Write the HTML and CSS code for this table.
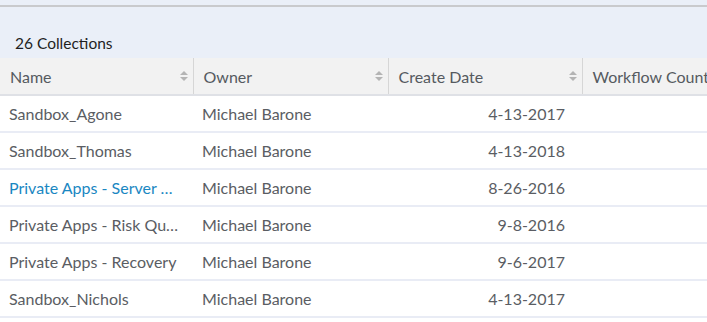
FILE: index.html
```html
<!DOCTYPE html>
<html>
<head>
<meta charset="utf-8">
<link rel="stylesheet" href="styles.css">
</head>
<body>
<div class="page">
  <div class="topline"></div>
  <div class="summary">26 Collections</div>
  <table class="grid">
    <colgroup>
      <col class="c-name"><col class="c-owner"><col class="c-date"><col class="c-count">
    </colgroup>
    <thead>
      <tr>
        <th><span class="hd">Name</span><span class="sort"></span></th>
        <th><span class="hd">Owner</span><span class="sort"></span></th>
        <th><span class="hd">Create Date</span><span class="sort"></span></th>
        <th class="last"><span class="hd">Workflow Count</span></th>
      </tr>
    </thead>
    <tbody>
      <tr><td>Sandbox_Agone</td><td>Michael Barone</td><td class="num">4-13-2017</td><td></td></tr>
      <tr><td>Sandbox_Thomas</td><td>Michael Barone</td><td class="num">4-13-2018</td><td></td></tr>
      <tr><td class="link">Private Apps - Server …</td><td>Michael Barone</td><td class="num">8-26-2016</td><td></td></tr>
      <tr><td>Private Apps - Risk Qu…</td><td>Michael Barone</td><td class="num">9-8-2016</td><td></td></tr>
      <tr><td>Private Apps - Recovery</td><td>Michael Barone</td><td class="num">9-6-2017</td><td></td></tr>
      <tr><td>Sandbox_Nichols</td><td>Michael Barone</td><td class="num">4-13-2017</td><td></td></tr>
    </tbody>
  </table>
</div>
</body>
</html>
```
FILE: styles.css
```css
html, body {
  margin: 0;
  padding: 0;
  background: #ffffff;
  font-family: Lato, "Open Sans", sans-serif;
  overflow: hidden;
}
.page {
  width: 100%;
  overflow: hidden;
  background: #eaeff8;
}
.topline {
  height: 5px;
  border-bottom: 2px solid #c9cacd;
}
.summary {
  height: 51px;
  box-sizing: border-box;
  padding: 26px 0 0 15px;
  font-size: 15.5px;
  color: #1f1f1f;
  line-height: 20px;
}
.grid {
  border-collapse: collapse;
  table-layout: fixed;
  width: 760px;
  background: #fff;
}
.c-name { width: 193px; }
.c-owner { width: 195px; }
.c-date { width: 194px; }
.c-count { width: 178px; }
th {
  background: #f2f2f2;
  height: 35px;
  padding: 0 9px 1px 10px;
  text-align: left;
  font-weight: normal;
  font-size: 16px;
  color: #555a60;
  border-right: 1px solid #d6d6d6;
  border-bottom: 2px solid #dfe1e6;
  white-space: nowrap;
  position: relative;
}
th.last { border-right: none; }
th .hd { vertical-align: middle; }
.sort {
  position: absolute;
  right: 9px;
  top: 13px;
  width: 0;
  height: 10px;
}
.sort::before, .sort::after {
  content: "";
  position: absolute;
  left: -4px;
  border-left: 4px solid transparent;
  border-right: 4px solid transparent;
}
.sort::before { top: 0; border-bottom: 4px solid #b4b4b4; }
.sort::after { top: 6px; border-top: 4px solid #b4b4b4; }
td {
  height: 35px;
  padding: 0 9px;
  font-size: 16px;
  color: #5a5d63;
  border-bottom: 2px solid #e9ecf5;
  white-space: nowrap;
  overflow: hidden;
}
td.link { color: #1a87c2; }
td.num { text-align: right; padding-right: 17px; }
```
